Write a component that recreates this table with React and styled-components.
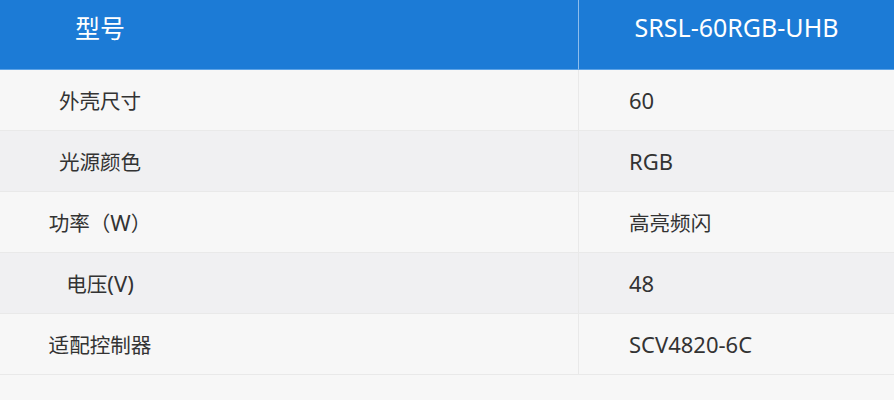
import React from "react";
import styled, { createGlobalStyle } from "styled-components";

const Global = createGlobalStyle`
  html, body { margin: 0; padding: 0; background: #f7f7f7; }
  body { font-family: "Noto Sans", "Noto Sans CJK SC", sans-serif; }
`;

const Table = styled.div`
  width: 894px;
  display: grid;
  grid-template-columns: 579px 1fr;
`;

const HeadCell = styled.div`
  height: 70px;
  box-sizing: border-box;
  background: #1c7bd6;
  color: #fff;
  font-size: 25px;
  display: flex;
  align-items: center;
  padding-bottom: 16px;
  border-bottom: 1px solid #5da3e6;
  border-right: ${(p) => (p.$first ? "1px solid #8dbdec" : "none")};
  justify-content: ${(p) => (p.$first ? "flex-start" : "center")};
`;

const Cell = styled.div`
  height: 61px;
  box-sizing: border-box;
  background: ${(p) => (p.$alt ? "#f0f0f2" : "#f7f7f7")};
  color: #333;
  font-size: 22px;
  display: flex;
  align-items: center;
  border-bottom: 1px solid #e9e9e9;
  border-right: ${(p) => (p.$first ? "1px solid #e9e9e9" : "none")};
  padding-left: ${(p) => (p.$first ? "0" : "50px")};
`;

const Label = styled.span`
  width: 200px;
  text-align: center;
  white-space: nowrap;
`;

const Cjk = styled.span`
  font-size: 0.935em;
`;

function Text({ children }) {
  const parts = children.split(/([\u3000-\u9fff\uff00-\uffef]+)/);
  return parts.map((s, i) =>
    i % 2 === 1 ? <Cjk key={i}>{s}</Cjk> : s
  );
}

const rows = [
  ["外壳尺寸", "60"],
  ["光源颜色", "RGB"],
  ["功率（W）", "高亮频闪"],
  ["电压(V)", "48"],
  ["适配控制器", "SCV4820-6C"],
];

export default function App() {
  return (
    <>
      <Global />
      <Table>
        <HeadCell $first>
          <Label>型号</Label>
        </HeadCell>
        <HeadCell>SRSL-60RGB-UHB</HeadCell>
        {rows.map(([k, v], i) => (
          <React.Fragment key={k}>
            <Cell $first $alt={i % 2 === 1}>
              <Label>
                <Text>{k}</Text>
              </Label>
            </Cell>
            <Cell $alt={i % 2 === 1}>
              <span>
                <Text>{v}</Text>
              </span>
            </Cell>
          </React.Fragment>
        ))}
      </Table>
    </>
  );
}
